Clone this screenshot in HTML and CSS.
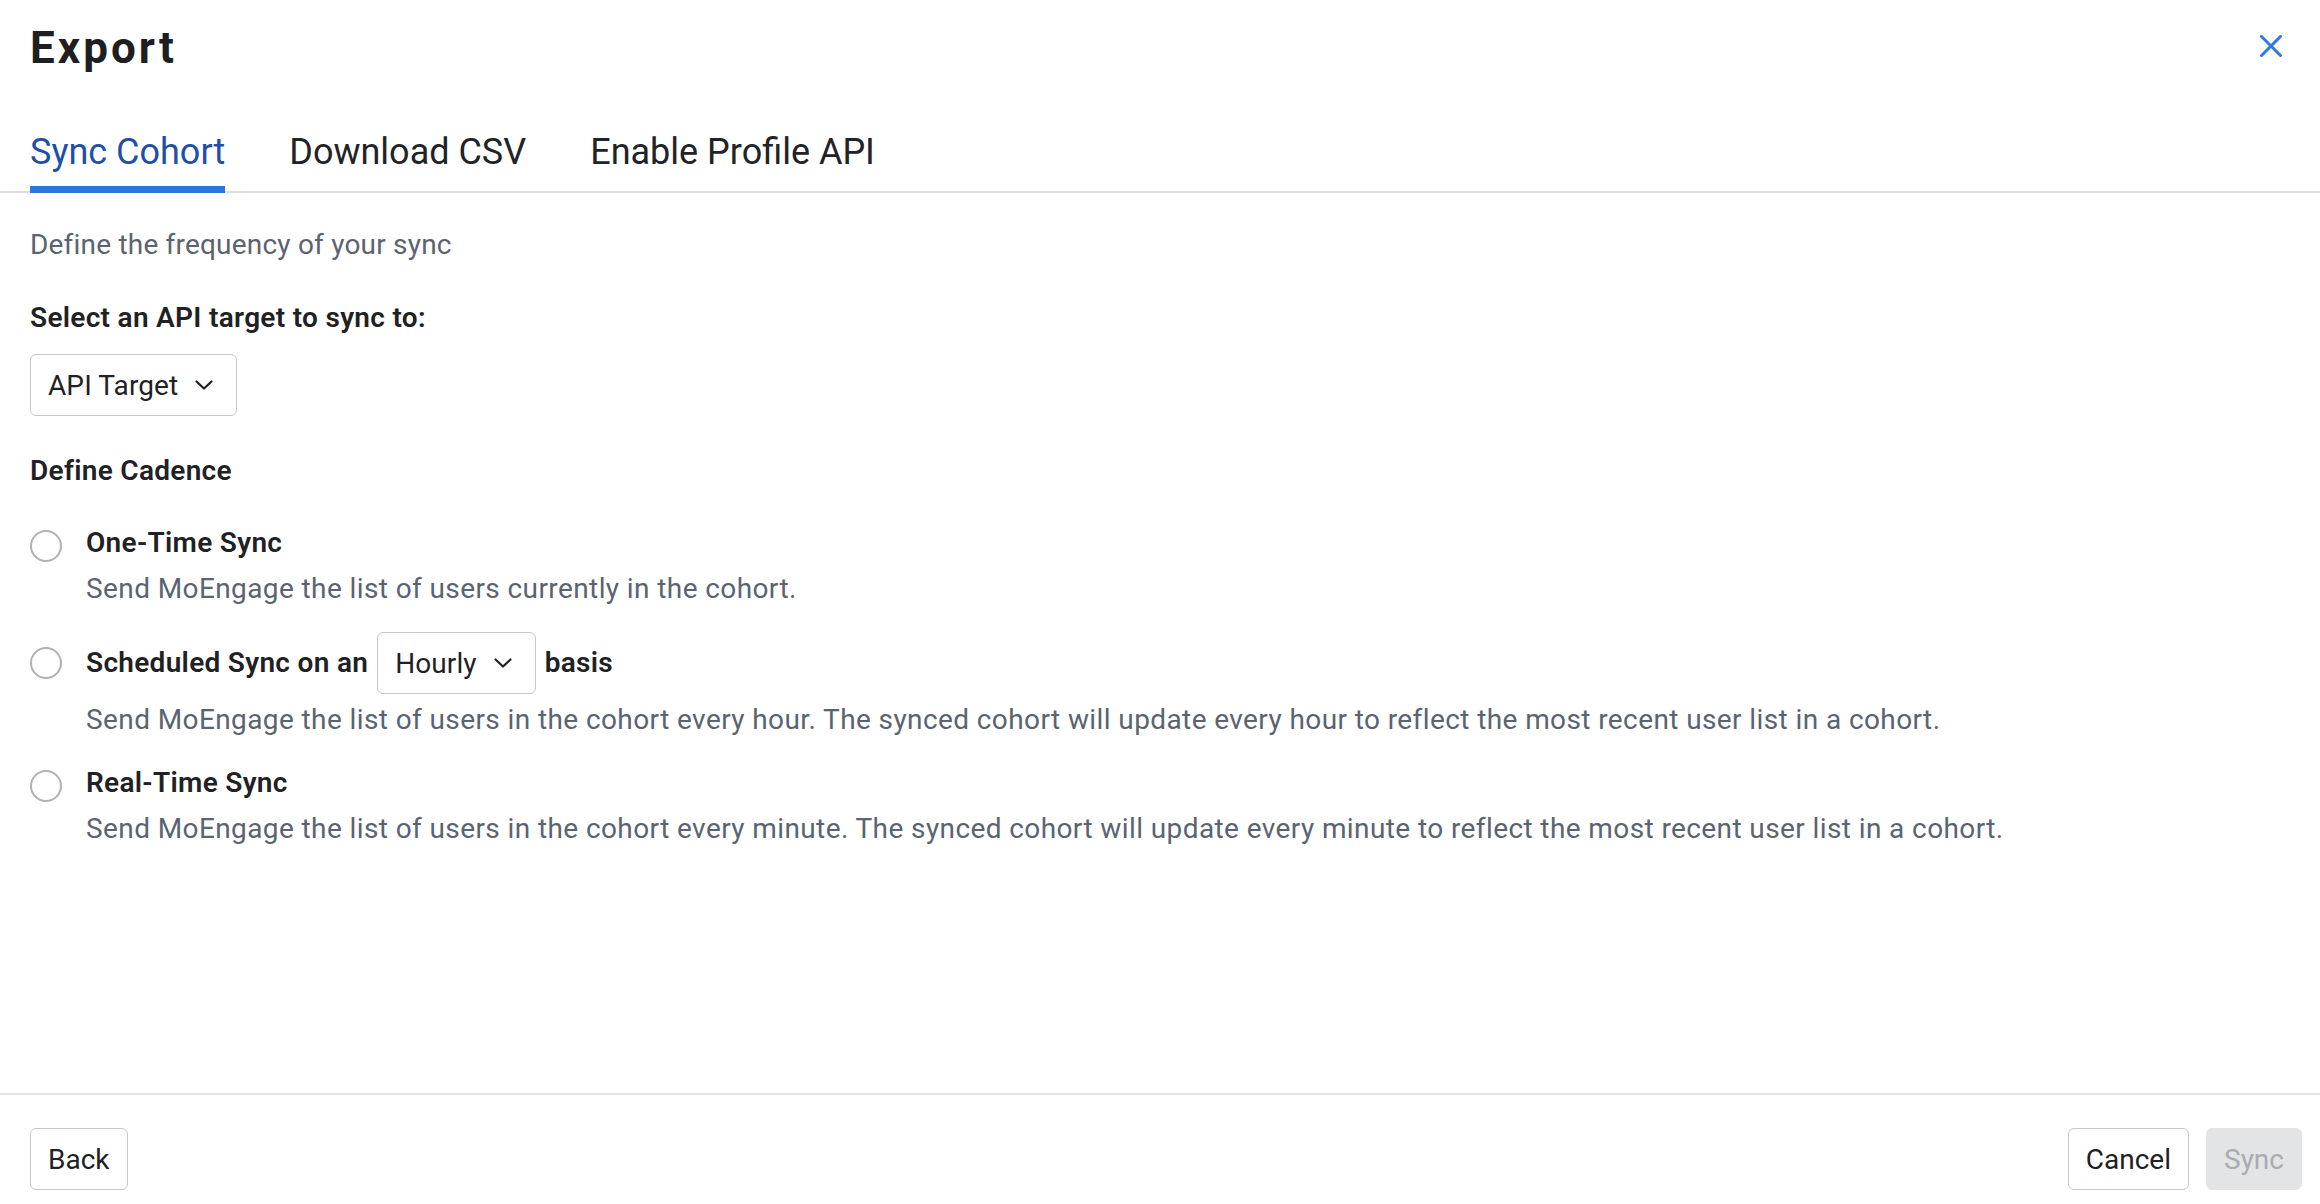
FILE: index.html
```html
<!DOCTYPE html>
<html lang="en">
<head>
    <meta charset="UTF-8">
    <meta name="viewport" content="width=device-width, initial-scale=1.0">
    <title>Export</title>
    <link rel="stylesheet" href="styles.css">
</head>
<body>
    <div class="modal">
        <header class="modal-header">
            <h1 class="modal-title">Export</h1>
            <button class="close-btn" aria-label="Close">
                <svg width="22" height="22" viewBox="0 0 22 22">
                    <path d="M1.5 1.5 L20.5 20.5 M20.5 1.5 L1.5 20.5" stroke="#2f7ae0" stroke-width="3" fill="none" stroke-linecap="square"/>
                </svg>
            </button>
        </header>

        <nav class="tabs">
            <a class="tab active">Sync Cohort</a>
            <a class="tab">Download CSV</a>
            <a class="tab">Enable Profile API</a>
        </nav>

        <main class="modal-body">
            <p class="intro">Define the frequency of your sync</p>

            <h3 class="field-label">Select an API target to sync to:</h3>
            <button class="dropdown">
                API Target
                <svg class="chevron" width="18" height="10" viewBox="0 0 18 10">
                    <path d="M1.5 1.5 L9 8.5 L16.5 1.5" stroke="#1f2124" stroke-width="2.2" fill="none" stroke-linecap="round" stroke-linejoin="round"/>
                </svg>
            </button>

            <h3 class="field-label cadence-label">Define Cadence</h3>

            <div class="options">
                <div class="option">
                    <div class="option-head">
                        <span class="radio"></span>
                        <span class="option-title">One-Time Sync</span>
                    </div>
                    <p class="option-desc">Send MoEngage the list of users currently in the cohort.</p>
                </div>

                <div class="option">
                    <div class="option-head inline">
                        <span class="radio"></span>
                        <span class="option-title">Scheduled Sync on an</span>
                        <button class="dropdown">
                            Hourly
                            <svg class="chevron" width="18" height="10" viewBox="0 0 18 10">
                                <path d="M1.5 1.5 L9 8.5 L16.5 1.5" stroke="#1f2124" stroke-width="2.2" fill="none" stroke-linecap="round" stroke-linejoin="round"/>
                            </svg>
                        </button>
                        <span class="option-title">basis</span>
                    </div>
                    <p class="option-desc">Send MoEngage the list of users in the cohort every hour. The synced cohort will update every hour to reflect the most recent user list in a cohort.</p>
                </div>

                <div class="option">
                    <div class="option-head">
                        <span class="radio"></span>
                        <span class="option-title">Real-Time Sync</span>
                    </div>
                    <p class="option-desc">Send MoEngage the list of users in the cohort every minute. The synced cohort will update every minute to reflect the most recent user list in a cohort.</p>
                </div>
            </div>
        </main>

        <footer class="modal-footer">
            <button class="btn">Back</button>
            <div class="footer-actions">
                <button class="btn">Cancel</button>
                <button class="btn btn-disabled" disabled>Sync</button>
            </div>
        </footer>
    </div>
</body>
</html>
```

FILE: styles.css
```css
* {
    margin: 0;
    padding: 0;
    box-sizing: border-box;
    font-family: Roboto, 'Noto Sans', sans-serif;
}

body {
    background: #fff;
    color: #1f2124;
}

.modal {
    height: 100vh;
    display: flex;
    flex-direction: column;
}

.modal-header {
    display: flex;
    justify-content: space-between;
    align-items: center;
    padding: 22px 38px 0 30px;
}

.modal-title {
    font-size: 44px;
    line-height: 52px;
    font-weight: 700;
    letter-spacing: 3px;
    color: #1d1f22;
}

.close-btn {
    background: none;
    border: none;
    display: flex;
    margin-top: -4px;
    cursor: pointer;
}

.tabs {
    display: flex;
    gap: 64px;
    margin-top: 56px;
    padding: 0 30px;
    border-bottom: 2px solid #dcdde0;
}

.tab {
    font-size: 36px;
    line-height: 44px;
    color: #212327;
    padding-bottom: 12px;
    border-bottom: 7px solid transparent;
    margin-bottom: -2px;
    cursor: pointer;
}

.tab.active {
    color: #1f4fa6;
    border-bottom-color: #2e75d9;
}

.modal-body {
    flex: 1;
    padding: 34px 30px 0 30px;
}

.intro {
    font-size: 28px;
    line-height: 36px;
    letter-spacing: 0.2px;
    color: #5c6370;
}

.field-label {
    font-size: 28px;
    line-height: 36px;
    font-weight: 600;
    letter-spacing: 0.3px;
    color: #1f2124;
    margin-top: 37px;
}

.cadence-label {
    margin-top: 37px;
}

.dropdown {
    display: inline-flex;
    align-items: center;
    gap: 17px;
    height: 62px;
    padding: 0 23px 0 17px;
    margin-top: 18px;
    background: #fff;
    border: 1px solid #c6c8cc;
    border-radius: 6px;
    font-size: 28px;
    letter-spacing: 0.1px;
    color: #1f2124;
    cursor: pointer;
}

.options {
    margin-top: 34px;
    display: flex;
    flex-direction: column;
    gap: 23px;
}

.option-head {
    display: flex;
    align-items: center;
    gap: 24px;
}

.option-head.inline .option-title + .dropdown {
    margin: 0 0 0 -15px;
}

.option-head.inline .dropdown + .option-title {
    margin-left: -15px;
}

.radio {
    width: 32px;
    height: 32px;
    border: 2px solid #aeb1b6;
    border-radius: 50%;
    flex-shrink: 0;
    margin-top: 6px;
}

.option-head.inline .radio {
    margin-top: 0;
}

.option-title {
    font-size: 28px;
    line-height: 40px;
    font-weight: 600;
    letter-spacing: 0.3px;
    color: #1f2124;
}

.option-desc {
    font-size: 28px;
    line-height: 40px;
    letter-spacing: 0.4px;
    color: #5c6370;
    padding-left: 56px;
    margin-top: 6px;
}

.modal-footer {
    display: flex;
    justify-content: space-between;
    align-items: center;
    border-top: 2px solid #e3e4e6;
    padding: 33px 18px 14px 30px;
}

.footer-actions {
    display: flex;
    gap: 17px;
}

.btn {
    height: 62px;
    padding: 0 17px;
    background: #fff;
    border: 1px solid #c6c8cc;
    border-radius: 6px;
    font-size: 28px;
    color: #1f2124;
    cursor: pointer;
}

.btn-disabled {
    background: #e3e4e6;
    border-color: #e3e4e6;
    color: #a9abb0;
    cursor: default;
}
```
